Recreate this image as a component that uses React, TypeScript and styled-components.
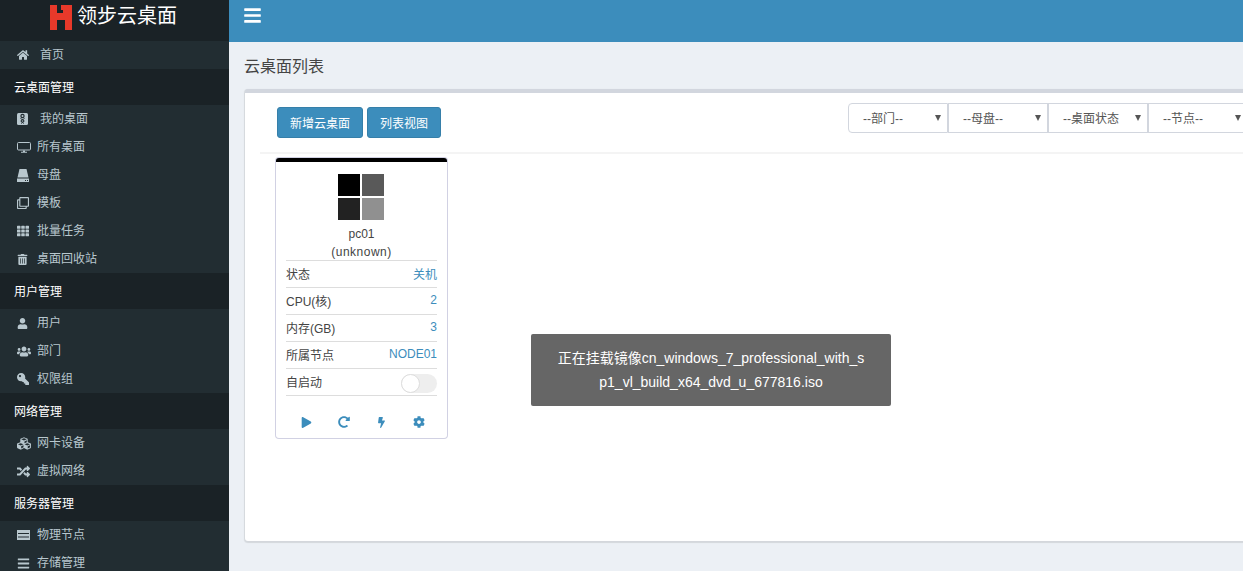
import styled, { createGlobalStyle } from "styled-components";
import { ReactNode } from "react";
import {
  FaBars, FaBolt, FaCog, FaCubes, FaHome, FaKey, FaPlay, FaRandom, FaRedoAlt,
  FaRegClone, FaTh, FaTrashAlt, FaUser, FaUsers,
} from "react-icons/fa";

const GlobalStyle = createGlobalStyle`
  html, body {
    margin: 0;
    height: 100%;
    overflow: hidden;
    font-family: "Liberation Sans", "Noto Sans CJK SC", sans-serif;
    font-size: 12px;
    color: #333;
  }
`;

const BadgeIcon = () => (
  <svg width="11" height="12" viewBox="0 0 11 12">
    <rect width="11" height="12" rx="1.5" fill="currentColor" />
    <circle cx="5.5" cy="3" r="1.6" fill="none" stroke="#222d32" strokeWidth="1.2" />
    <path d="M3.5 5.5l4 2.5M7.5 5.5l-4 2.5M4 10.5l3-2.5M7 10.5L4 8" stroke="#222d32" strokeWidth="1" />
  </svg>
);

const ScreenIcon = () => (
  <svg width="14" height="11" viewBox="0 0 14 11">
    <rect x="0.5" y="0.5" width="13" height="7.5" rx="1" fill="none" stroke="currentColor" />
    <path d="M6 8.5h2v1.2h2v1H4v-1h2z" fill="currentColor" />
  </svg>
);

const DiskIcon = () => (
  <svg width="12" height="13" viewBox="0 0 12 13">
    <path d="M2.5 0h7L11.5 8.5H.5z" fill="currentColor" />
    <path d="M0 9.5h12V13H0z" fill="currentColor" />
    <path d="M8 11h1v1H8zM10 11h1v1h-1z" fill="#222d32" />
  </svg>
);

const NodeIcon = () => (
  <svg width="13" height="10" viewBox="0 0 13 10">
    <rect width="13" height="10" fill="currentColor" />
    <path d="M1 3h11v1H1zM1 6.5h11v1H1z" fill="#222d32" />
  </svg>
);

const KeyIcon = styled(FaKey)`
  transform: scaleX(-1);
`;

type NavEntry = { icon: ReactNode; label: string; indent?: number };
type NavGroup = { title?: string; items: NavEntry[] };

const groups: NavGroup[] = [
  { items: [{ icon: <FaHome />, label: "首页", indent: 40 }] },
  {
    title: "云桌面管理",
    items: [
      { icon: <BadgeIcon />, label: "我的桌面", indent: 40 },
      { icon: <ScreenIcon />, label: "所有桌面" },
      { icon: <DiskIcon />, label: "母盘" },
      { icon: <FaRegClone />, label: "模板" },
      { icon: <FaTh />, label: "批量任务" },
      { icon: <FaTrashAlt size={11} />, label: "桌面回收站" },
    ],
  },
  {
    title: "用户管理",
    items: [
      { icon: <FaUser size={11} />, label: "用户" },
      { icon: <FaUsers size={15} />, label: "部门" },
      { icon: <KeyIcon size={12} />, label: "权限组" },
    ],
  },
  {
    title: "网络管理",
    items: [
      { icon: <FaCubes size={15} />, label: "网卡设备" },
      { icon: <FaRandom size={13} />, label: "虚拟网络" },
    ],
  },
  {
    title: "服务器管理",
    items: [
      { icon: <NodeIcon />, label: "物理节点" },
      { icon: <FaBars size={13} />, label: "存储管理" },
    ],
  },
];

const filters = ["--部门--", "--母盘--", "--桌面状态", "--节点--"];

export default function App() {
  return (
    <>
      <GlobalStyle />
      <Page>
        <Sidebar>
          <Logo>
            <svg width="22" height="25" viewBox="0 0 22 25">
              <path d="M0 0h7v8h6V5h-2V0h11v25h-7V15H7v10H0z" fill="#e8392a" />
            </svg>
            <LogoText>领步云桌面</LogoText>
          </Logo>
          {groups.map((group, i) => (
            <div key={i}>
              {group.title && <GroupTitle>{group.title}</GroupTitle>}
              {group.items.map((item) => (
                <NavItem key={item.label}>
                  <NavIcon>{item.icon}</NavIcon>
                  <NavLabel $left={item.indent ?? 37}>{item.label}</NavLabel>
                </NavItem>
              ))}
            </div>
          ))}
        </Sidebar>
        <Main>
          <TopBar>
            <FaBars size={19} color="#fff" />
          </TopBar>
          <Content>
            <PageTitle>云桌面列表</PageTitle>
            <Panel>
              <Toolbar>
                <Buttons>
                  <Button>新增云桌面</Button>
                  <Button>列表视图</Button>
                </Buttons>
                <Filters>
                  {filters.map((label) => (
                    <Filter key={label}>
                      <span>{label}</span>
                      <Arrow />
                    </Filter>
                  ))}
                </Filters>
              </Toolbar>
              <DesktopCard>
                <OsIcon>
                  <Pane $color="#000" />
                  <Pane $color="#595959" />
                  <Pane $color="#222" />
                  <Pane $color="#909090" />
                </OsIcon>
                <CardName>pc01</CardName>
                <CardSub>(unknown)</CardSub>
                <InfoRows>
                  <InfoRow><span>状态</span><InfoValue>关机</InfoValue></InfoRow>
                  <InfoRow><span>CPU(核)</span><InfoValue>2</InfoValue></InfoRow>
                  <InfoRow><span>内存(GB)</span><InfoValue>3</InfoValue></InfoRow>
                  <InfoRow><span>所属节点</span><InfoValue>NODE01</InfoValue></InfoRow>
                  <InfoRow><span>自启动</span><Toggle /></InfoRow>
                </InfoRows>
                <Actions>
                  <FaPlay size={11} />
                  <FaRedoAlt size={12} />
                  <FaBolt size={11} />
                  <FaCog size={12} />
                </Actions>
              </DesktopCard>
              <Toast>
                正在挂载镜像cn_windows_7_professional_with_s
                <br />
                p1_vl_build_x64_dvd_u_677816.iso
              </Toast>
            </Panel>
          </Content>
        </Main>
      </Page>
    </>
  );
}

const Page = styled.div`
  display: flex;
  width: 1243px;
  height: 571px;
  overflow: hidden;
  background: #ecf0f5;
`;

const Sidebar = styled.aside`
  flex: 0 0 229px;
  height: 571px;
  overflow: hidden;
  background: #222d32;
`;

const Logo = styled.div`
  height: 41px;
  padding: 5px 0 0 50px;
  box-sizing: border-box;
  display: flex;
  align-items: flex-start;
  gap: 5px;
  background: #1a2226;
`;

const LogoText = styled.span`
  font-size: 20px;
  line-height: 22px;
  color: #fff;
`;

const GroupTitle = styled.div`
  height: 36px;
  line-height: 38px;
  padding-left: 14px;
  color: #fff;
  background: #1a2226;
`;

const NavItem = styled.div`
  height: 28px;
  line-height: 28px;
  color: #b8c7ce;
  display: flex;
  align-items: center;
`;

const NavIcon = styled.span`
  width: 14px;
  margin-left: 17px;
  display: flex;
  justify-content: flex-start;
  font-size: 12px;
`;

const NavLabel = styled.span<{ $left: number }>`
  margin-left: ${(p) => p.$left - 31}px;
`;

const Main = styled.main`
  flex: 1;
  min-width: 0;
`;

const TopBar = styled.header`
  height: 42px;
  box-sizing: border-box;
  padding: 6px 0 0 14px;
  background: #3c8dbc;
`;

const Content = styled.div`
  padding: 0 0 0 16px;
`;

const PageTitle = styled.h1`
  margin: 0 0 0 -1px;
  height: 47px;
  font-size: 16px;
  font-weight: 400;
  line-height: 49px;
  color: #444;
`;

const Panel = styled.section`
  position: relative;
  width: 1020px;
  height: 452px;
  box-sizing: border-box;
  border-top: 4px solid #d2d6de;
  border-radius: 3px;
  background: #fff;
  box-shadow: 0 1px 1px 1px rgba(0, 0, 0, 0.1);
`;

const Toolbar = styled.div`
  display: flex;
  justify-content: space-between;
  height: 59px;
  margin-left: 15px;
  border-bottom: 2px solid #f4f4f4;
`;

const Buttons = styled.div`
  display: flex;
  align-items: flex-start;
  gap: 4px;
  padding: 14px 0 0 17px;
`;

const Button = styled.button`
  height: 31px;
  padding: 0 12px;
  border: 1px solid #367fa9;
  border-radius: 3px;
  background: #3c8dbc;
  color: #fff;
  font: inherit;
`;

const Filters = styled.div`
  display: flex;
  align-items: flex-start;
  padding: 10px 0 0;
  margin-right: 17px;
`;

const Filter = styled.div`
  position: relative;
  width: 100px;
  height: 30px;
  box-sizing: border-box;
  border: 1px solid #d2d6de;
  padding-left: 14px;
  line-height: 30px;
  color: #555;
  &:first-child {
    border-radius: 4px 0 0 4px;
  }
`;

const Arrow = styled.i`
  position: absolute;
  right: 6px;
  top: 11px;
  border-style: solid;
  border-width: 6px 3.5px 0;
  border-color: #555 transparent transparent;
`;

const DesktopCard = styled.article`
  width: 171px;
  height: 280px;
  box-sizing: border-box;
  margin: 4px 0 0 31px;
  padding: 12px 10px 0;
  border-top: 4px solid #000;
  border-radius: 3px;
  background: #fff;
  box-shadow: 0 0 0 1px rgba(190, 190, 215, 0.7);
  text-align: center;
`;

const OsIcon = styled.div`
  display: grid;
  grid-template-columns: 22px 22px;
  grid-template-rows: 22px 22px;
  gap: 2px;
  width: 46px;
  margin: 0 0 5px 52px;
`;

const Pane = styled.div<{ $color: string }>`
  background: ${(p) => p.$color};
`;

const CardName = styled.div`
  line-height: 18px;
  color: #444;
`;

const CardSub = styled(CardName)`
  margin-bottom: -1px;
  letter-spacing: 0.5px;
`;

const InfoRows = styled.div`
  border-top: 1px solid #ddd;
`;

const InfoRow = styled.div`
  display: flex;
  justify-content: space-between;
  align-items: center;
  height: 27px;
  box-sizing: border-box;
  padding-bottom: 2px;
  border-bottom: 1px solid #ddd;
  color: #444;
`;

const InfoValue = styled.span`
  color: #3c8dbc;
`;

const Toggle = styled.span`
  position: relative;
  width: 36px;
  height: 19px;
  margin-top: 4px;
  border-radius: 10px;
  background: #eee;
  &::before {
    content: "";
    position: absolute;
    left: 0;
    top: 0;
    width: 17px;
    height: 17px;
    border: 1px solid #ddd;
    border-radius: 50%;
    background: #fff;
  }
`;

const Actions = styled.div`
  display: grid;
  grid-template-columns: 38px 38px 37px 38px;
  justify-items: center;
  align-items: center;
  padding: 20px 0 0 1px;
  color: #3c8dbc;
`;

const Toast = styled.div`
  position: absolute;
  left: 286px;
  top: 241px;
  width: 360px;
  height: 72px;
  box-sizing: border-box;
  padding: 12px 0;
  border-radius: 2px;
  background: #666;
  color: #fff;
  font-size: 14px;
  line-height: 24px;
  text-align: center;
`;
